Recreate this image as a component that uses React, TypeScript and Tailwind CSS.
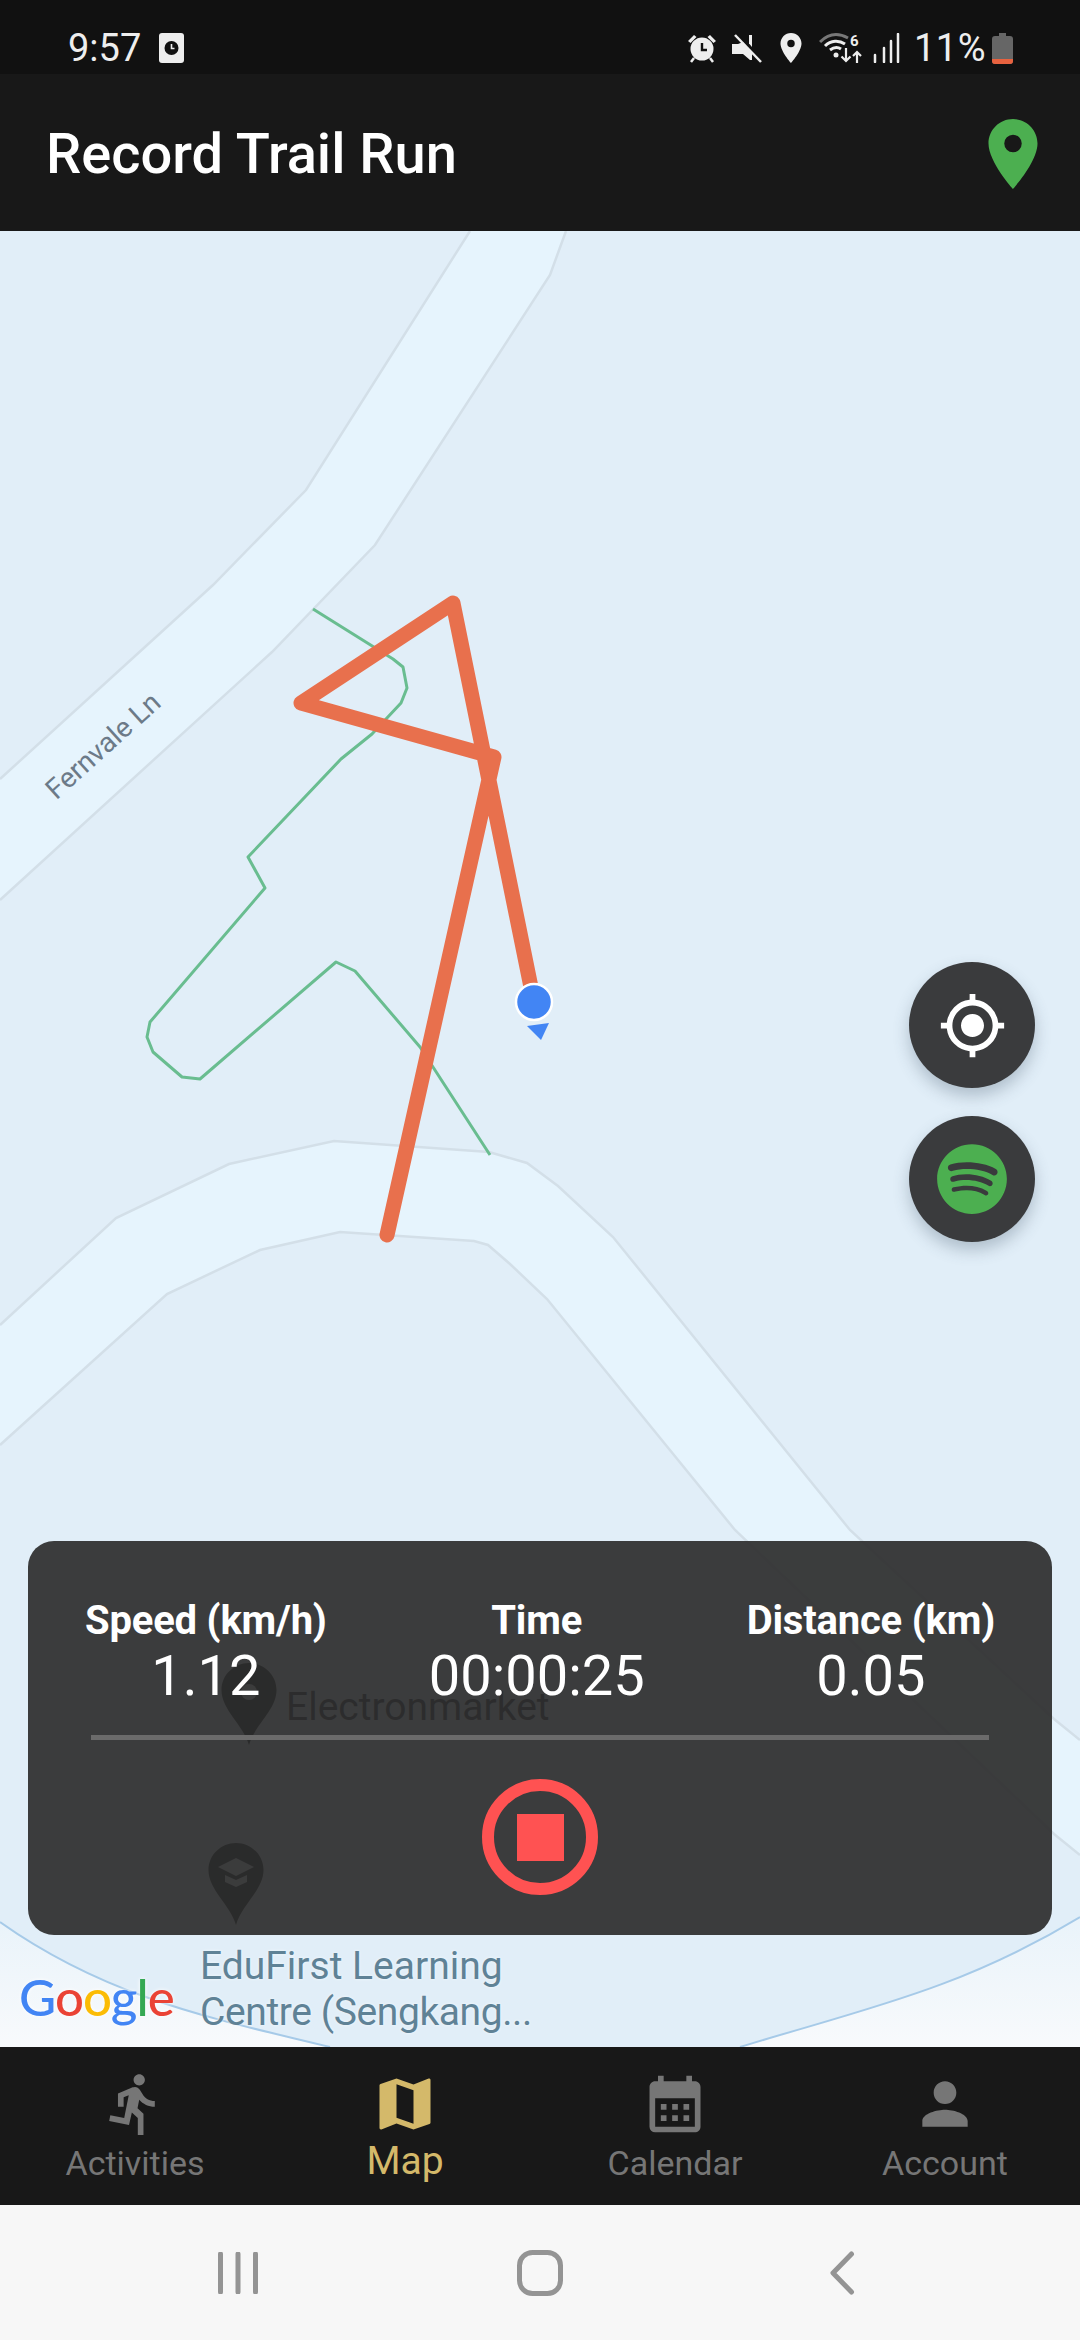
import { FaSpotify } from "react-icons/fa";
import {
  MdCalendarMonth,
  MdDirectionsRun,
  MdGpsFixed,
  MdLocationOn,
  MdMap,
  MdPerson,
} from "react-icons/md";

const stats = [
  { label: "Speed (km/h)", value: "1.12" },
  { label: "Time", value: "00:00:25" },
  { label: "Distance (km)", value: "0.05" },
];

const tabs = [
  { label: "Activities", Icon: MdDirectionsRun, active: false },
  { label: "Map", Icon: MdMap, active: true },
  { label: "Calendar", Icon: MdCalendarMonth, active: false },
  { label: "Account", Icon: MdPerson, active: false },
];

function StatusBar() {
  return (
    <div className="flex h-[74px] shrink-0 items-center justify-between bg-[#111111] pl-[68px] pr-[67px] pt-[22px] text-[#eeeeee]">
      <div className="flex items-center gap-[18px]">
        <span className="text-[38px] leading-[40px]">9:57</span>
        <svg width="25" height="30" viewBox="0 0 25 30">
          <rect width="25" height="30" rx="3" fill="#eeeeee" />
          <circle cx="12.5" cy="15" r="7" fill="#111111" />
          <path d="M12.5 11v4.5h3" stroke="#eeeeee" strokeWidth="1.6" fill="none" />
        </svg>
      </div>
      <div className="flex items-center">
        <svg width="30" height="30" viewBox="0 0 30 30">
          <circle cx="15" cy="16" r="11.5" fill="#eeeeee" />
          <path d="M15 10v7h5" stroke="#111111" strokeWidth="2.4" fill="none" />
          <path d="M1 8l6-6 2.500 2-6 6zM29 8l-6-6-2.500 2 6 6z" fill="#eeeeee" />
          <path d="M7 25l-3 4M23 25l3 4" stroke="#eeeeee" strokeWidth="2.500" />
        </svg>
        <svg className="ml-[15px]" width="31" height="30" viewBox="0 0 31 30">
          <path d="M0 11h6l5-2 9 11v7h-2l-7-6H0z" fill="#eeeeee" />
          <path d="M17 2h3v12l-3-3.500z" fill="#eeeeee" />
          <path d="M3 2l26 27" stroke="#eeeeee" strokeWidth="2.500" />
        </svg>
        <MdLocationOn className="ml-[10px]" size={36} />
        <svg className="ml-[10px]" width="45" height="32" viewBox="0 0 45 32">
          <path d="M1 10C10 1 20 1 29 6" stroke="#777777" strokeWidth="3" fill="none" />
          <path d="M6 14c6-6 14-6 20-2M11 18c4-3 8-3 11-1" stroke="#eeeeee" strokeWidth="3" fill="none" />
          <circle cx="17" cy="23" r="2.500" fill="#eeeeee" />
          <path d="M27 16v13M22.500 24.500l4.500 4.500 4.500-4.500M38 31V20M34 24l4-4 4 4" stroke="#eeeeee" strokeWidth="2.200" fill="none" />
          <text x="31" y="14" fontSize="15" fontWeight="700" fill="#eeeeee" fontFamily="Roboto, sans-serif">
            6
          </text>
        </svg>
        <svg className="ml-[9px]" width="27" height="30" viewBox="0 0 27 30">
          <path d="M2 22v7M11 15v14M18 8v21M25 1v28" stroke="#eeeeee" strokeWidth="2.500" strokeLinecap="round" />
        </svg>
        <span className="ml-[14px] text-[38px] leading-[40px] tracking-[0.5px]">11%</span>
        <svg className="ml-[6px]" width="21" height="31" viewBox="0 0 21 31">
          <path d="M7 0h7v3h4a3 3 0 0 1 3 3v22a3 3 0 0 1-3 3H3a3 3 0 0 1-3-3V6a3 3 0 0 1 3-3h4z" fill="#666666" />
          <path d="M0 26h21v2a3 3 0 0 1-3 3H3a3 3 0 0 1-3-3z" fill="#e8623f" />
        </svg>
      </div>
    </div>
  );
}

function MapDrawing() {
  return (
    <svg className="absolute inset-0 h-full w-full" viewBox="0 231 1080 1816">
      <defs>
        <linearGradient id="shore" x1="0" y1="1915" x2="0" y2="2047" gradientUnits="userSpaceOnUse">
          <stop offset="0" stopColor="#e9f3fa" />
          <stop offset="1" stopColor="#f8fafc" />
        </linearGradient>
      </defs>
      <path d="M0 1922C110 2000 220 2020 330 2047H0z" fill="url(#shore)" />
      <path d="M1080 1917C960 1990 860 2010 740 2047H1080z" fill="url(#shore)" />
      <path d="M0 1922C110 2000 220 2020 330 2047M1080 1917C960 1990 860 2010 740 2047" fill="none" stroke="#a6cae8" strokeWidth="2" />

      <polygon fill="#e6f4fd" points="470,231 306,490 213,585 0,779 0,900 272,652 375,545 550,275 566,231" />
      <polygon
        fill="#e6f4fd"
        points="0,1325 116,1218 229,1164 334,1141 489,1152 527,1163 558,1186 613,1237 850,1530 1054,1719 1080,1740 1080,1855 1054,1834 735,1530 547,1299 510,1264 488,1245 474,1241 340,1232 260,1250 167,1294 0,1445"
      />
      <g fill="none" stroke="#d3dfe8" strokeWidth="2.500">
        <polyline points="470,231 306,490 213,585 0,779" />
        <polyline points="566,231 550,275 375,545 272,652 0,900" />
        <polyline points="0,1325 116,1218 229,1164 334,1141 489,1152 527,1163 558,1186 613,1237 850,1530 1054,1719 1080,1740" />
        <polyline points="0,1445 167,1294 260,1250 340,1232 474,1241 488,1245 510,1264 547,1299 735,1530 1054,1834 1080,1855" />
      </g>

      <polyline
        fill="none"
        stroke="#69bd90"
        strokeWidth="3"
        strokeLinejoin="round"
        points="313,609 393,659 403,667 407,688 401,703 372,734 341,759 248,857 265,888 150,1022 147,1037 153,1052 182,1077 200,1079 336,962 355,971 420,1047 490,1155"
      />
      <polyline
        fill="none"
        stroke="#e8704d"
        strokeWidth="15"
        strokeLinejoin="round"
        strokeLinecap="round"
        points="387,1235 494,757 301,703 453,603 534,1002"
      />
      <polygon points="527,1026 549,1023 541,1040" fill="#4285f4" />
      <circle cx="534" cy="1002" r="18" fill="#4285f4" stroke="#ffffff" strokeWidth="2.500" />

      {/* pins that sit under the stats panel */}
      <path d="M249 1663c-15 0-27.500 12-27.500 27 0 20 22 35 27.500 55 5.500-20 27.500-35 27.500-55 0-15-12.500-27-27.500-27z" fill="#16191b" />
      <circle cx="249" cy="1692" r="8" fill="#dfe9f0" />
      <path d="M236 1843c-15 0-27.500 12-27.500 27 0 20 22 35 27.500 55 5.500-20 27.500-35 27.500-55 0-15-12.500-27-27.500-27z" fill="#16191b" />
      <path d="M236 1858l-18 9 18 9 18-9zM225 1875v7l11 5 11-5v-7l-11 5z" fill="#dfe9f0" />
    </svg>
  );
}

function GoogleMark() {
  return (
    <span className="absolute left-[19px] top-[1736px] font-['Lato',sans-serif] text-[51px] font-medium leading-[60px] tracking-[-1px] [text-shadow:0_0_4px_#ffffff]">
      <span className="text-[#4285f4]">G</span>
      <span className="text-[#ea4335]">o</span>
      <span className="text-[#fbbc05]">o</span>
      <span className="text-[#4285f4]">g</span>
      <span className="text-[#34a853]">l</span>
      <span className="text-[#ea4335]">e</span>
    </span>
  );
}

function StatsPanel() {
  return (
    <div className="relative flex flex-col rounded-[26px] bg-[#2c2c2d]/92 pb-[40px] pt-[59px] text-white">
      <div className="flex justify-between px-[57px]">
        {stats.map((s) => (
          <div key={s.label} className="flex flex-col items-center">
            <span className="text-[40px] font-bold leading-[42px] tracking-[-0.2px]">{s.label}</span>
            <span className="mt-[2px] text-[56px] leading-[64px]">{s.value}</span>
          </div>
        ))}
      </div>
      <div className="mx-[63px] mt-[27px] h-[5px] bg-[#6b6b6b]" />
      <div className="mt-[39px] flex justify-center">
        <div className="flex h-[116px] w-[116px] items-center justify-center rounded-full border-[12px] border-[#ff5252]">
          <div className="h-[47px] w-[47px] bg-[#ff5252]" />
        </div>
      </div>
    </div>
  );
}

function MapArea() {
  return (
    <div className="relative flex h-[1816px] shrink-0 flex-col justify-end overflow-hidden bg-[#e1eef8] px-[28px] pb-[112px]">
      <MapDrawing />
      <span className="absolute left-[32px] top-[497px] -rotate-[42deg] text-[28px] leading-[36px] text-[#6c7a88]">
        Fernvale Ln
      </span>
      <span className="absolute left-[286px] top-[1453px] text-[39px] leading-[46px] text-[#2a3034]">
        Electronmarket
      </span>
      <div className="absolute left-[200px] top-[1712px] text-[39px] leading-[46px] text-[#5f8296] [text-shadow:0_0_3px_#f4f9fd]">
        <div>EduFirst Learning</div>
        <div className="tracking-[-0.4px]">Centre (Sengkang...</div>
      </div>
      <GoogleMark />
      <div className="absolute right-[45px] top-[731px] flex flex-col gap-[28px]">
        <button className="flex h-[126px] w-[126px] items-center justify-center rounded-full bg-[#3a3b3d] text-white shadow-[0_8px_16px_rgba(60,80,100,0.3)]">
          <MdGpsFixed size={69} />
        </button>
        <button className="flex h-[126px] w-[126px] items-center justify-center rounded-full bg-[#3a3b3d] text-[#4caf50] shadow-[0_8px_16px_rgba(60,80,100,0.3)]">
          <FaSpotify size={72} />
        </button>
      </div>
      <StatsPanel />
    </div>
  );
}

function BottomNav() {
  return (
    <div className="grid h-[158px] shrink-0 grid-cols-4 bg-[#181818] pt-[23px]">
      {tabs.map(({ label, Icon, active }) => (
        <div key={label} className={active ? "flex flex-col items-center text-[#d4b96a]" : "flex flex-col items-center text-[#767676]"}>
          <Icon size={68} />
          <span className={active ? "mt-[3px] text-[39px] leading-[40px]" : "mt-[5px] text-[34px] leading-[40px]"}>{label}</span>
        </div>
      ))}
    </div>
  );
}

function SystemNav() {
  return (
    <div className="flex flex-1 items-center justify-between bg-[#f7f7f7] pl-[218px] pr-[225px] text-[#949494]">
      <svg width="40" height="42" viewBox="0 0 40 42">
        <path d="M2.500 2v38M20 2v38M37.500 2v38" stroke="currentColor" strokeWidth="5" strokeLinecap="round" />
      </svg>
      <svg className="mr-[8px]" width="46" height="46" viewBox="0 0 46 46">
        <rect x="2.500" y="2.500" width="41" height="41" rx="13" fill="none" stroke="currentColor" strokeWidth="5" />
      </svg>
      <svg width="26" height="44" viewBox="0 0 26 44">
        <path d="M22.500 3L4 22l18.500 19" fill="none" stroke="currentColor" strokeWidth="5" strokeLinecap="round" strokeLinejoin="round" />
      </svg>
    </div>
  );
}

export default function App() {
  return (
    <div className="flex h-[2340px] w-[1080px] flex-col font-['Roboto',sans-serif]">
      <StatusBar />
      <div className="flex h-[157px] shrink-0 items-center justify-between bg-[#181818] pl-[46px] pr-[25px] pt-[2px]">
        <h1 className="text-[56px] font-medium leading-[64px] text-white">Record Trail Run</h1>
        <MdLocationOn className="text-[#4caf50]" size={84} />
      </div>
      <MapArea />
      <BottomNav />
      <SystemNav />
    </div>
  );
}
